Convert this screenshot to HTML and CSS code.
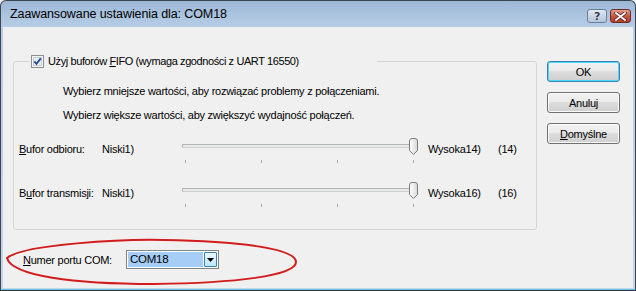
FILE: index.html
```html
<!DOCTYPE html>
<html lang="pl">
<head>
<meta charset="utf-8">
<title>Zaawansowane ustawienia dla: COM18</title>
<link rel="stylesheet" href="styles.css">
</head>
<body>
<div class="window">
  <div class="titlebar">
    <span class="title">Zaawansowane ustawienia dla: COM18</span>
    <div class="caption-btns">
      <span class="cbtn help">?</span>
      <span class="cbtn close"><svg width="13" height="9" viewBox="0 0 13 9"><path d="M2 1 L11 8 M11 1 L2 8" stroke="#5a1a1a" stroke-width="3.4" stroke-linecap="square"/><path d="M2 1 L11 8 M11 1 L2 8" stroke="#fff" stroke-width="1.8" stroke-linecap="square"/></svg></span>
    </div>
  </div>
  <div class="client">
    <div class="main">
      <fieldset class="group">
        <legend class="legend">
          <span class="check"><svg width="13" height="13" viewBox="0 0 13 13"><rect x="0.5" y="0.5" width="12" height="12" fill="#f4f4f4" stroke="#8e8f8f"/><rect x="2.5" y="2.5" width="8" height="8" fill="#e6ecf2" stroke="#c5cdd6"/><path d="M3.3 6.4 L5.5 8.8 L9.8 3.4" fill="none" stroke="#2b4c8c" stroke-width="1.8"/></svg></span>
          <span class="legend-text">Użyj buforów <u>F</u>IFO (wymaga zgodności z UART 16550)</span>
        </legend>
        <p class="hint">Wybierz mniejsze wartości, aby rozwiązać problemy z połączeniami.</p>
        <p class="hint second">Wybierz większe wartości, aby zwiększyć wydajność połączeń.</p>
        <div class="slider-row">
          <span class="slabel"><u>B</u>ufor odbioru:</span>
          <span class="low">Niski1)</span>
          <div class="slider">
            <span class="track"></span>
            <span class="tick t1"></span><span class="tick t2"></span><span class="tick t3"></span><span class="tick t4"></span>
            <svg class="thumb" width="11" height="18" viewBox="0 0 11 18"><defs><linearGradient id="tg" x1="0" y1="0" x2="1" y2="0"><stop offset="0" stop-color="#ffffff"/><stop offset="1" stop-color="#d8d8d8"/></linearGradient></defs><path d="M1.5 3 Q1.5 0.5 4 0.5 H7 Q9.5 0.5 9.5 3 V12.5 L5.5 16.5 L1.5 12.5 Z" fill="url(#tg)" stroke="#7b7b7b"/></svg>
          </div>
          <span class="high">Wysoka14)</span>
          <span class="val">(14)</span>
        </div>
        <div class="slider-row row2">
          <span class="slabel">B<u>u</u>for transmisji:</span>
          <span class="low">Niski1)</span>
          <div class="slider">
            <span class="track"></span>
            <span class="tick t1"></span><span class="tick t2"></span><span class="tick t3"></span><span class="tick t4"></span>
            <svg class="thumb" width="11" height="18" viewBox="0 0 11 18"><path d="M1.5 3 Q1.5 0.5 4 0.5 H7 Q9.5 0.5 9.5 3 V12.5 L5.5 16.5 L1.5 12.5 Z" fill="url(#tg)" stroke="#7b7b7b"/></svg>
          </div>
          <span class="high">Wysoka16)</span>
          <span class="val">(16)</span>
        </div>
      </fieldset>
      <div class="port-row">
        <span class="port-label"><u>N</u>umer portu COM:</span>
        <div class="combo">
          <span class="combo-value">COM18</span>
          <span class="combo-btn"><svg width="7" height="4" viewBox="0 0 7 4"><path d="M0 0 H7 L3.5 4 Z" fill="#000"/></svg></span>
        </div>
      </div>
    </div>
    <div class="buttons">
      <button class="btn default">OK</button>
      <button class="btn">Anuluj</button>
      <button class="btn"><u>D</u>omyślne</button>
    </div>
  </div>
  <svg class="mark" width="300" height="52" viewBox="0 0 300 52"><path d="M3 22 C 20 8, 120 3, 160 4 C 230 5, 292 12, 292 26 C 292 40, 230 47, 150 48 C 70 48, 8 40, 3 22 Z" fill="none" stroke="#d21c1c" stroke-width="2"/></svg>
</div>
</body>
</html>
```
FILE: styles.css
```css
html, body {
  margin: 0;
  padding: 0;
  background: #f0f0f0;
}
body {
  font-family: "Liberation Sans", Arial, sans-serif;
  font-size: 11px;
  letter-spacing: -0.25px;
  color: #000;
}
.window {
  position: relative;
  box-sizing: border-box;
  width: 636px;
  height: 291px;
  border: 1px solid #3d4650;
  border-bottom-color: #2f3a44;
  border-radius: 6px 6px 0 0;
  background: linear-gradient(#9db8d6 0, #b6cde6 26px, #c3d7ec 100%);
  padding: 0 2px 2px 2px;
  display: flex;
  flex-direction: column;
  box-shadow: inset 0 -1px 0 #66c4e0;
}
.titlebar {
  height: 26px;
  display: flex;
  justify-content: space-between;
  align-items: flex-start;
}
.title {
  font-size: 12.5px;
  letter-spacing: -0.1px;
  padding-left: 7px;
  padding-top: 6px;
  color: #000;
}
.caption-btns {
  display: flex;
  gap: 3px;
  margin-top: 8px;
  margin-right: 2px;
}
.cbtn {
  box-sizing: border-box;
  height: 14px;
  border-radius: 3px;
  display: flex;
  align-items: center;
  justify-content: center;
}
.help {
  width: 20px;
  border: 1px solid #6b7f95;
  background: linear-gradient(#dfe8f1, #b4c6d9);
  font-family: "DejaVu Sans", sans-serif;
  font-weight: bold;
  font-size: 11px;
  color: #2f3d4e;
  text-shadow: 0 0 1px #fff;
}
.close {
  width: 21px;
  border: 1px solid #6e2a24;
  background: linear-gradient(#e4a08f, #c3523f 55%, #b8412f);
}
.client {
  flex: 1;
  background: #f0f0f0;
  display: flex;
}
.main {
  width: 534px;
  padding-left: 10px;
}
.group {
  margin: 27px 0 0 0;
  padding: 0 0 22px 5px;
  width: 524px;
  box-sizing: border-box;
  border: 1px solid #d5d5d5;
  border-radius: 3px;
  min-width: 0;
}
.legend {
  margin-left: 10px;
  padding: 0 2px;
  width: 348px;
  box-sizing: border-box;
  display: flex;
  align-items: center;
  height: 14px;
}
.legend-text {
  letter-spacing: -0.4px;
}
.check {
  display: flex;
  margin-right: 4px;
}
.hint {
  margin: 16px 0 0 44px;
  line-height: 14px;
}
.hint.second {
  margin-top: 10px;
}
.slider-row {
  display: grid;
  grid-template-columns: 83px 80px 238px 78px auto;
  margin-top: 15px;
  height: 26px;
}
.slider-row.row2 {
  margin-top: 18px;
}
.slabel, .low, .high, .val {
  padding-top: 5px;
  line-height: 14px;
}
.high {
  padding-left: 8px;
}
.slider {
  position: relative;
  height: 26px;
}
.track {
  position: absolute;
  left: 0;
  top: 7px;
  width: 234px;
  height: 2px;
  background: #e7eaea;
  border: 1px solid #b4b4b4;
  border-bottom-color: #d0d0d0;
  border-radius: 1px;
}
.tick {
  position: absolute;
  top: 23px;
  width: 1px;
  height: 3px;
  background: #a8a8a8;
}
.t1 { left: 3px; }
.t2 { left: 79px; }
.t3 { left: 155px; }
.t4 { left: 231px; }
.thumb {
  position: absolute;
  left: 226px;
  top: 1px;
}
.port-row {
  display: flex;
  align-items: center;
  margin-top: 20px;
  padding-left: 10px;
}
.port-label {
  width: 103px;
}
.combo {
  box-sizing: border-box;
  width: 93px;
  height: 19px;
  border: 1px solid #7f8487;
  background: #fff;
  display: flex;
  align-items: center;
  padding: 1px;
}
.combo-value {
  flex: 1;
  height: 15px;
  line-height: 15px;
  background: #a6cdf6;
  padding-left: 2px;
  font-size: 11.5px;
  margin-right: 1px;
}
.combo-btn {
  box-sizing: border-box;
  width: 13px;
  height: 15px;
  border: 1px solid #3c7fb1;
  border-radius: 1px;
  background: linear-gradient(#eaf6fd, #bee6fd);
  display: flex;
  align-items: center;
  justify-content: center;
}
.buttons {
  display: flex;
  flex-direction: column;
  gap: 10px;
  padding-top: 34px;
}
.btn {
  box-sizing: border-box;
  width: 73px;
  height: 21px;
  border: 1px solid #707070;
  border-radius: 3px;
  background: linear-gradient(#f2f2f2 0, #ebebeb 45%, #dddddd 50%, #cfcfcf 100%);
  font-family: "Liberation Sans", Arial, sans-serif;
  font-size: 11px;
  letter-spacing: -0.25px;
  color: #000;
  padding: 0;
  box-shadow: inset 0 0 0 1px #fbfbfb;
}
.btn.default {
  border-color: #3c7fb1;
  box-shadow: inset 0 0 0 1px #48d8fb;
}
.mark {
  position: absolute;
  left: 3px;
  top: 235px;
}
```
